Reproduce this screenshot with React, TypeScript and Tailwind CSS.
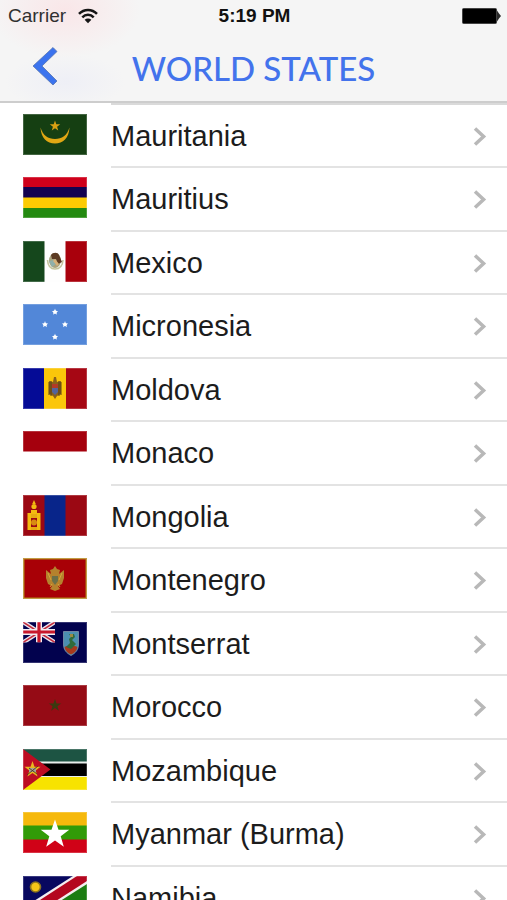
import React from 'react';

interface Country {
    name: string;
    flag: React.ReactNode;
}

// Five-pointed star centred on (cx, cy)
function Star({ cx, cy, r, fill }: { cx: number; cy: number; r: number; fill: string }) {
    const points = Array.from({ length: 10 }, (_, i) => {
        const radius = i % 2 === 0 ? r : r * 0.4;
        const angle = (Math.PI / 5) * i - Math.PI / 2;
        return `${cx + radius * Math.cos(angle)},${cy + radius * Math.sin(angle)}`;
    }).join(' ');
    return <polygon points={points} fill={fill} />;
}

const countries: Country[] = [
    {
        name: 'Mauritania',
        flag: (
            <>
                <rect width="64" height="41" fill="#153f12" />
                <path d="M17.5 13.5C18 24 24 29.5 32 29.5S46 24 46.5 13.5C44 21.5 39 25 32 25S20 21.5 17.5 13.5Z" fill="#e0a714" />
                <Star cx={32} cy={12} r={5.5} fill="#d9a013" />
            </>
        ),
    },
    {
        name: 'Mauritius',
        flag: (
            <>
                <rect width="64" height="11" fill="#cf001b" />
                <rect y="10" width="64" height="11" fill="#130350" />
                <rect y="20.5" width="64" height="11" fill="#fccb03" />
                <rect y="31" width="64" height="10" fill="#238a10" />
            </>
        ),
    },
    {
        name: 'Mexico',
        flag: (
            <>
                <rect width="64" height="41" fill="#fefefe" />
                <rect width="21.5" height="41" fill="#15471c" />
                <rect x="42.5" width="21.5" height="41" fill="#a9000c" />
                <path d="M24.5 19C25 26 28.5 28 32 28S39.5 26 40 19" fill="none" stroke="#c4c49c" strokeWidth="1.6" />
                <ellipse cx="32" cy="19.5" rx="6" ry="7.5" fill="#a9a37f" />
                <path d="M28 14c2-3 7-3 8 0l3 7-4 2-2-5-4 0z" fill="#5b3a22" />
                <path d="M26 20l5-1 2 4-4 3z" fill="#8fb0ab" />
                <path d="M32 18l4 5-2 2-4-5z" fill="#d8b078" />
            </>
        ),
    },
    {
        name: 'Micronesia',
        flag: (
            <>
                <rect width="64" height="41" fill="#5287d8" />
                <circle cx="32" cy="8" r="1.8" fill="#fff" />
                <circle cx="22" cy="20.5" r="1.8" fill="#fff" />
                <circle cx="42" cy="20.5" r="1.8" fill="#fff" />
                <circle cx="32" cy="33" r="1.8" fill="#fff" />
                <Star cx={32} cy={8} r={3.4} fill="#fff" />
                <Star cx={22} cy={20.5} r={3.4} fill="#fff" />
                <Star cx={42} cy={20.5} r={3.4} fill="#fff" />
                <Star cx={32} cy={33} r={3.4} fill="#fff" />
            </>
        ),
    },
    {
        name: 'Moldova',
        flag: (
            <>
                <rect width="64" height="41" fill="#fbc60a" />
                <rect width="21" height="41" fill="#050b96" />
                <rect x="43" width="21" height="41" fill="#a60714" />
                <path d="M31 9h2l1 5 4-1v13l-4 2-2 3-2-3-4-2V13l4 1z" fill="#8a611b" />
                <path d="M26 14v13M38 14v13M28 13v15M36 13v15" stroke="#4f3815" strokeWidth="0.9" />
                <path d="M29 16h6v4h-6z" fill="#b23a26" />
                <path d="M29 20h6v4l-3 3-3-3z" fill="#53639b" />
            </>
        ),
    },
    {
        name: 'Monaco',
        flag: (
            <>
                <rect width="64" height="41" fill="#fff" />
                <rect width="64" height="20.5" fill="#a5000d" />
            </>
        ),
    },
    {
        name: 'Mongolia',
        flag: (
            <>
                <rect width="64" height="41" fill="#9b0813" />
                <rect x="21.5" width="21" height="41" fill="#08258a" />
                <circle cx="11" cy="11.5" r="2.6" fill="#f3ba10" />
                <path d="M11 5l1.8 4h-3.6zM8 15h6v4H8zM4.5 18H8v17H4.5zM14 18h3.5v17H14z" fill="#f3ba10" />
                <path d="M8 19h6v4H8zM8 32h6v3H8z" fill="#e7a912" />
                <circle cx="11" cy="27.5" r="3" fill="#d88b12" />
            </>
        ),
    },
    {
        name: 'Montenegro',
        flag: (
            <>
                <rect width="64" height="41" fill="#b38217" />
                <rect x="1.5" y="1.5" width="61" height="38" fill="#a80006" />
                <path d="M32 8l2 3 3 1-1 4 5-4v8l-2 6-4 2 2 3-5 2-5-2 2-3-4-2-2-6v-8l5 4-1-4 3-1z" fill="#b5822d" />
                <path d="M25 15l3 7M39 15l-3 7M27 29l2-3M37 29l-2-3" stroke="#d9ab3c" strokeWidth="0.9" />
                <path d="M29 18h6v5l-3 4-3-4z" fill="#6b7048" />
            </>
        ),
    },
    {
        name: 'Montserrat',
        flag: (
            <>
                <rect width="64" height="41" fill="#02024e" />
                <svg width="32" height="20.5" viewBox="0 0 32 20.5">
                    <path d="M0 0l32 20.5M32 0L0 20.5" stroke="#e9e2ec" strokeWidth="4.4" />
                    <path d="M0 0l32 20.5M32 0L0 20.5" stroke="#c42c3c" strokeWidth="1.5" />
                    <path d="M16 0v20.5M0 10h32" stroke="#f3edf2" strokeWidth="6" />
                    <path d="M16 0v20.5M0 10h32" stroke="#c8182c" strokeWidth="3.2" />
                </svg>
                <path d="M40.5 9.5h15V22c0 6-3 9-7.5 11.5-4.5-2.5-7.5-5.5-7.5-11.5z" fill="#4b8fb0" stroke="#8193a8" strokeWidth="0.8" />
                <path d="M41.5 25c4-2 9-2 13 0-1 4-3 6-6.5 7.5C44.5 31 42.5 29 41.5 25z" fill="#a8391c" />
                <path d="M46 12l5 0 1 3-3 3 4 4-5 5-5-2 4-4-1-4 2-2z" fill="#2f6b3c" />
                <path d="M47 12h3v3h-3z" fill="#9a8a45" />
            </>
        ),
    },
    {
        name: 'Morocco',
        flag: (
            <>
                <rect width="64" height="41" fill="#950b15" />
                <Star cx={32} cy={20.5} r={6.5} fill="#3b3a10" />
            </>
        ),
    },
    {
        name: 'Mozambique',
        flag: (
            <>
                <rect width="64" height="41" fill="#1d5443" />
                <rect y="12.5" width="64" height="16" fill="#e9efec" />
                <rect y="14.5" width="64" height="12.5" fill="#000" />
                <rect y="28" width="64" height="13" fill="#f7e300" />
                <path d="M0 0l27.5 20.5L0 41z" fill="#bd0d22" />
                <Star cx={9.5} cy={20.5} r={8.5} fill="#e8b720" />
                <path d="M6 19h7v4H6z" fill="#a5a297" />
                <path d="M4 26l11-9M6 19l8 6" stroke="#4c3a20" strokeWidth="0.9" />
            </>
        ),
    },
    {
        name: 'Myanmar (Burma)',
        flag: (
            <>
                <rect width="64" height="14" fill="#f6b90c" />
                <rect y="13.5" width="64" height="14.5" fill="#319b08" />
                <rect y="27.5" width="64" height="13.5" fill="#d00217" />
                <Star cx={32} cy={22.5} r={15} fill="#fff" />
            </>
        ),
    },
    {
        name: 'Namibia',
        flag: (
            <>
                <rect width="64" height="41" fill="#08085f" />
                <path d="M64 0v41H0z" fill="#1c7d12" />
                <path d="M0 41V32L50 0h14v8L12 41z" fill="#f4eef0" />
                <path d="M0 41v-6L54 0h10v5L8 41z" fill="#b4071f" />
                <circle cx="12.5" cy="11" r="5.8" fill="#8a7320" />
                <circle cx="12.5" cy="11" r="4.2" fill="#f5c518" />
            </>
        ),
    },
];

function StatusBar() {
    return (
        <div className="grid h-8 grid-cols-3 items-center pr-[6px] pl-2 text-[19px] leading-8">
            <div className="flex items-center gap-3 text-[#303030]">
                <span>Carrier</span>
                <svg width="20" height="16" viewBox="0 0 20 16" fill="none" stroke="#151515" strokeWidth="2.5" aria-hidden="true">
                    <path d="M1 5.8C6 .6 14 .6 19 5.8" />
                    <path d="M4.3 9.3C7.5 6 12.500 6 15.700 9.300" />
                    <path d="M10 15.3L6.6 11.8c2-1.7 4.8-1.7 6.8 0z" fill="#151515" stroke="none" />
                </svg>
            </div>
            <span className="text-center font-bold text-[#111111]">5:19 PM</span>
            <svg className="justify-self-end" width="39" height="16" viewBox="0 0 39 16" aria-hidden="true">
                <rect x="0.5" y="0.5" width="34" height="15" rx="1" fill="#000" stroke="#444" />
                <path d="M35 2.5l2 3 2 2.5-2 2.5-2 3z" fill="#2b2b2b" />
            </svg>
        </div>
    );
}

function CountryRow({ name, flag }: Country) {
    return (
        <li className="h-16 odd:h-[63px]">
            <a href="#" className="flex h-full pl-[23px]">
                <svg className="mt-[9px] mr-6 shrink-0" width="64" height="41" viewBox="0 0 64 41" aria-hidden="true">
                    {flag}
                    <rect x="0.5" y="0.5" width="63" height="40" fill="none" stroke="#fff" strokeOpacity="0.2" />
                </svg>
                <div className="flex flex-1 items-center justify-between border-b-2 border-[#e3e3e3] pr-5">
                    <span className="text-[29px] leading-9 whitespace-nowrap text-[#1c1c1c]">{name}</span>
                    <svg width="14" height="22" viewBox="0 0 14 22" fill="none" stroke="#b8b8b8" strokeWidth="3.5" aria-hidden="true">
                        <path d="M2 3.500l8.600 8L2 19.500" />
                    </svg>
                </div>
            </a>
        </li>
    );
}

export default function App() {
    return (
        <div className="flex h-screen flex-col overflow-hidden bg-white font-['Liberation_Sans',Arial,sans-serif]">
            <header className="shrink-0 border-b-2 border-[#cdcdcd] bg-[#f5f5f5] bg-[radial-gradient(ellipse_75px_48px_at_65px_10px,#f9e6e8,transparent),radial-gradient(ellipse_60px_28px_at_65px_82px,#eeeff6,transparent)]">
                <StatusBar />
                <nav className="grid h-[69px] grid-cols-[1fr_auto_1fr] items-center">
                    <button type="button" aria-label="Back" className="ml-8 justify-self-start">
                        <svg width="26" height="40" viewBox="0 0 26 40" aria-hidden="true">
                            <path d="M1 19L21 0.500l4 4L10 19l15 15-4 4z" fill="#3b73ee" stroke="#5574b0" strokeWidth="0.8" />
                        </svg>
                    </button>
                    <h1 className="pt-[2px] font-['Lato','Liberation_Sans',sans-serif] text-[33px] leading-10 font-medium whitespace-nowrap text-[#4373ec]">
                        WORLD STATES
                    </h1>
                </nav>
            </header>
            <main className="min-h-0 flex-1 overflow-y-auto [scrollbar-width:none]">
                <div className="ml-[111px] h-[2px] bg-[#dadada]" />
                <ul>
                    {countries.map((country) => (
                        <CountryRow key={country.name} {...country} />
                    ))}
                </ul>
            </main>
        </div>
    );
}
